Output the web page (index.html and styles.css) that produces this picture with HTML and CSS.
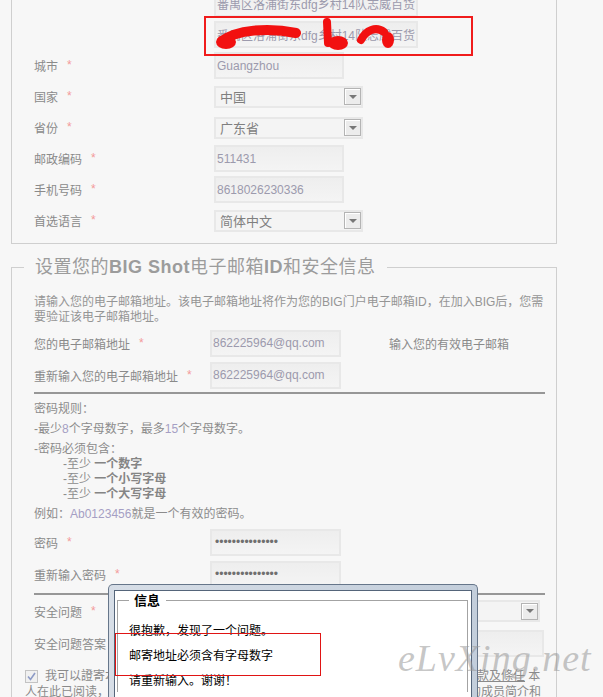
FILE: index.html
```html
<!DOCTYPE html>
<html lang="zh-CN">
<head>
    <meta charset="UTF-8">
    <title>BIG 会员注册</title>
    <link rel="stylesheet" href="styles.css">
</head>
<body>
    <div class="page">
        <!-- Address section (top cut off) -->
        <div class="box box-top">
            <div class="form-grid grid-addr">
                <span class="label"></span>
                <div class="cell"><input class="txt w-addr" type="text" value="番禺区洛浦街东dfg乡村14队志威百货" readonly></div>

                <span class="label"></span>
                <div class="cell"><input class="txt w-addr" type="text" value="番禺区洛浦街东dfg乡村14队志威百货" readonly></div>

                <label class="label">城市<i class="req">*</i></label>
                <div class="cell"><input class="txt w-short" type="text" value="Guangzhou" readonly></div>

                <label class="label">国家<i class="req">*</i></label>
                <div class="cell"><div class="sel"><span>中国</span><span class="sel-arrow"></span></div></div>

                <label class="label">省份<i class="req">*</i></label>
                <div class="cell"><div class="sel"><span>广东省</span><span class="sel-arrow"></span></div></div>

                <label class="label">邮政编码<i class="req">*</i></label>
                <div class="cell"><input class="txt w-short" type="text" value="511431" readonly></div>

                <label class="label">手机号码<i class="req">*</i></label>
                <div class="cell"><input class="txt w-short" type="text" value="8618026230336" readonly></div>

                <label class="label">首选语言<i class="req">*</i></label>
                <div class="cell"><div class="sel"><span>简体中文</span><span class="sel-arrow"></span></div></div>
            </div>
        </div>

        <!-- Email and security section -->
        <fieldset class="box box-mail">
            <legend>设置您的<b>BIG Shot</b>电子邮箱<b>ID</b>和安全信息</legend>

            <p class="intro">请输入您的电子邮箱地址。该电子邮箱地址将作为您的BIG门户电子邮箱ID，在加入BIG后，您需要验证该电子邮箱地址。</p>

            <div class="form-grid grid-mail">
                <label class="label">您的电子邮箱地址<i class="req">*</i></label>
                <div class="cell"><input class="txt w-mail" type="text" value="862225964@qq.com" readonly><span class="hint">输入您的有效电子邮箱</span></div>

                <label class="label">重新输入您的电子邮箱地址<i class="req">*</i></label>
                <div class="cell"><input class="txt w-mail" type="text" value="862225964@qq.com" readonly></div>
            </div>

            <hr class="sep">

            <div class="rules">
                <p>密码规则：</p>
                <p>-最少<span class="num">8</span>个字母数字，最多<span class="num">15</span>个字母数字。</p>
                <p class="has-sub">-密码必须包含：</p>
                <ul class="sub">
                    <li>-至少 <b>一个数字</b></li>
                    <li>-至少 <b>一个小写字母</b></li>
                    <li>-至少 <b>一个大写字母</b></li>
                </ul>
                <p>例如：<span class="num">Ab0123456</span>就是一个有效的密码。</p>
            </div>

            <div class="form-grid grid-mail">
                <label class="label">密码<i class="req">*</i></label>
                <div class="cell"><input class="txt w-mail pw" type="password" value="abcdefghijklmno" readonly></div>

                <label class="label">重新输入密码<i class="req">*</i></label>
                <div class="cell"><input class="txt w-mail pw" type="password" value="abcdefghijklmno" readonly></div>
            </div>

            <hr class="sep sep-low">

            <div class="form-grid grid-mail">
                <label class="label">安全问题<i class="req">*</i></label>
                <div class="cell"><div class="sel w-question"><span></span><span class="sel-arrow"></span></div></div>

                <label class="label">安全问题答案<i class="req">*</i></label>
                <div class="cell"><input class="txt w-answer" type="text" value="" readonly></div>
            </div>

            <p class="agree"><span class="check"><svg width="11" height="11" viewBox="0 0 11 11"><path d="M2 5.5 L4.5 8.5 L9 2" fill="none" stroke="#8d9bc6" stroke-width="1.6"/></svg></span>我可以證寄本人已年滿十八歲，並確認所提供之資料真實無誤，且同意遵守本站<u>條款及條任</u> 本<br>人在此已阅读，理解並同意上述條款，並同意接收由本站發送的電子郵件及其他有關的成员简介和</p>
        </fieldset>
    </div>

    <!-- Annotations drawn over the screenshot -->
    <div class="mark mark-addr">
        <svg width="265" height="36" viewBox="0 0 265 36">
            <g fill="none" stroke="#f21010" stroke-linecap="round" stroke-linejoin="round">
                <path d="M16 23 C30 12 62 9 90 15" stroke-width="10"/>
                <path d="M121 4 L122 25" stroke-width="8"/>
                <path d="M155 22 C160 12 170 8 178 14" stroke-width="8"/>
            </g>
            <g fill="#f21010">
                <ellipse cx="20" cy="24" rx="10" ry="7"/>
                <ellipse cx="132" cy="25" rx="10" ry="7"/>
                <ellipse cx="182" cy="22" rx="6" ry="8"/>
            </g>
        </svg>
    </div>

    <div class="dialog">
        <div class="dialog-panel">
            <fieldset class="msg">
                <legend>信息</legend>
                <p>很抱歉，发现了一个问题。</p>
                <p>邮寄地址必须含有字母数字</p>
                <p>请重新输入。谢谢！</p>
            </fieldset>
        </div>
    </div>

    <div class="mark mark-msg"></div>

    <div class="watermark">eLvXing.net</div>
</body>
</html>
```

FILE: styles.css
```css
/* Page base */
html, body {
    overflow: hidden;
}

body {
    margin: 0;
    background-color: #f7f7f7;
    font-family: "Liberation Sans", Arial, "Noto Sans CJK SC", sans-serif;
    font-size: 12px;
    color: #8c8c8c;
}

.page {
    width: 546px;
    padding-left: 11px;
}

/* Section boxes */
.box {
    border: 1px solid #cfcfcf;
}

.box-top {
    margin-top: -40px;
    padding: 27px 11px 7px 22px;
}

.box-mail {
    margin: 13px 0 0;
    padding: 18px 11px 30px 22px;
    min-width: 0;
}

.box-mail legend {
    margin-left: -10px;
    padding: 0 11px;
    font-size: 18px;
    line-height: 20px;
    letter-spacing: 0.5px;
    color: #9c9c9c;
}

/* Label / field grid */
.form-grid {
    display: grid;
    align-items: center;
}

.grid-addr {
    grid-template-columns: 180px 1fr;
    grid-auto-rows: 31px;
}

.grid-mail {
    grid-template-columns: 176px 1fr;
    grid-auto-rows: 32px;
}

.label {
    color: #8a8a8a;
    white-space: nowrap;
}

.req {
    font-style: normal;
    color: #f39a9a;
    margin-left: 9px;
    vertical-align: 2px;
}

.cell {
    display: flex;
    align-items: center;
}

/* Inputs */
.txt {
    height: 27px;
    box-sizing: border-box;
    border: 2px solid #e8e8e8;
    background: linear-gradient(#eeeeee, #f4f4f4);
    padding: 0 1px;
    margin: 0;
    font-family: "Liberation Sans", Arial, "Noto Sans CJK SC", sans-serif;
    font-size: 12px;
    color: #9c9aad;
    outline: none;
}

.w-addr { width: 204px; }
.w-short { width: 130px; }
.w-mail { width: 131px; }
.w-answer { width: 334px; }

.pw {
    color: #6f6f6f;
    padding-left: 3px;
}

.hint {
    margin-left: 48px;
    color: #8a8a8a;
}

/* Fake select */
.sel {
    display: flex;
    align-items: center;
    justify-content: space-between;
    width: 149px;
    height: 22px;
    box-sizing: border-box;
    border: 2px solid #e8e8e8;
    background-color: #f4f4f4;
    padding-left: 4px;
    color: #7f7f7f;
    font-size: 13px;
}

.w-question { width: 330px; }

.sel-arrow {
    display: flex;
    align-items: center;
    justify-content: center;
    width: 17px;
    height: 17px;
    box-sizing: border-box;
    border: 1px solid #b4b4b4;
    background-color: #ececec;
    box-shadow: inset 1px 1px #ffffff;
}

.sel-arrow::after {
    content: "";
    border-left: 4px solid transparent;
    border-right: 4px solid transparent;
    border-top: 4px solid #777777;
}

/* Texts in the mail box */
.intro {
    margin: 0 0 2px;
    line-height: 15px;
    color: #959595;
}

.sep {
    margin: 1px 0 0;
    height: 0;
    border: 0;
    border-top: 2px solid #979797;
}

.sep-low {
    margin-top: 3px;
}

.rules {
    margin-top: 7px;
    color: #8c8c8c;
}

.rules p {
    margin: 0 0 4px;
    line-height: 16px;
}

.rules .has-sub {
    margin-bottom: 0;
}

.sub {
    list-style: none;
    margin: 0 0 4px;
    padding-left: 29px;
}

.sub li {
    line-height: 15px;
}

.sub b {
    color: #858585;
}

.num {
    color: #a59fc4;
}

/* Agreement */
.agree {
    margin: 9px 0 0 -9px;
    line-height: 16px;
    white-space: nowrap;
    color: #8a8a8a;
}

.check {
    display: inline-flex;
    align-items: center;
    justify-content: center;
    width: 13px;
    height: 13px;
    box-sizing: border-box;
    border: 1px solid #c3c3c3;
    background-color: #f0f0f0;
    margin-right: 7px;
    vertical-align: -2px;
}

/* Message dialog */
.dialog {
    position: absolute;
    left: 108px;
    top: 584px;
    width: 370px;
    height: 140px;
    box-sizing: border-box;
    border: 1px solid #66768a;
    border-bottom: 0;
    border-radius: 5px 5px 0 0;
    background: linear-gradient(90deg, #d7dee7, #c3cedb);
    padding: 5px 5px 0;
}

.dialog-panel {
    height: 100%;
    box-sizing: border-box;
    border: 1px solid #55657a;
    border-bottom: 0;
    background-color: #ffffff;
    padding: 1px 3px 0 2px;
}

.msg {
    margin: 0;
    padding: 9px 11px 0;
    border: 1px solid #a3a3a3;
    border-bottom: 0;
    color: #000000;
    font-family: "Noto Sans CJK SC", sans-serif;
}

.msg legend {
    padding: 0 6px 0 5px;
    font-size: 13px;
    line-height: 16px;
    font-weight: bold;
}

.msg p {
    margin: 0;
    line-height: 25px;
}

/* Red annotation frames */
.mark {
    position: absolute;
    box-sizing: border-box;
}

.mark-addr {
    left: 204px;
    top: 16px;
    width: 269px;
    height: 40px;
    border: 2px solid #f01c1c;
}

.mark-addr svg {
    display: block;
}

.mark-msg {
    left: 115px;
    top: 633px;
    width: 206px;
    height: 43px;
    border: 1px solid #e01414;
}

.watermark {
    position: absolute;
    left: 398px;
    top: 639px;
    font: italic 38px/38px "Liberation Serif", serif;
    letter-spacing: 1px;
    color: rgba(150, 150, 150, 0.55);
}
```
